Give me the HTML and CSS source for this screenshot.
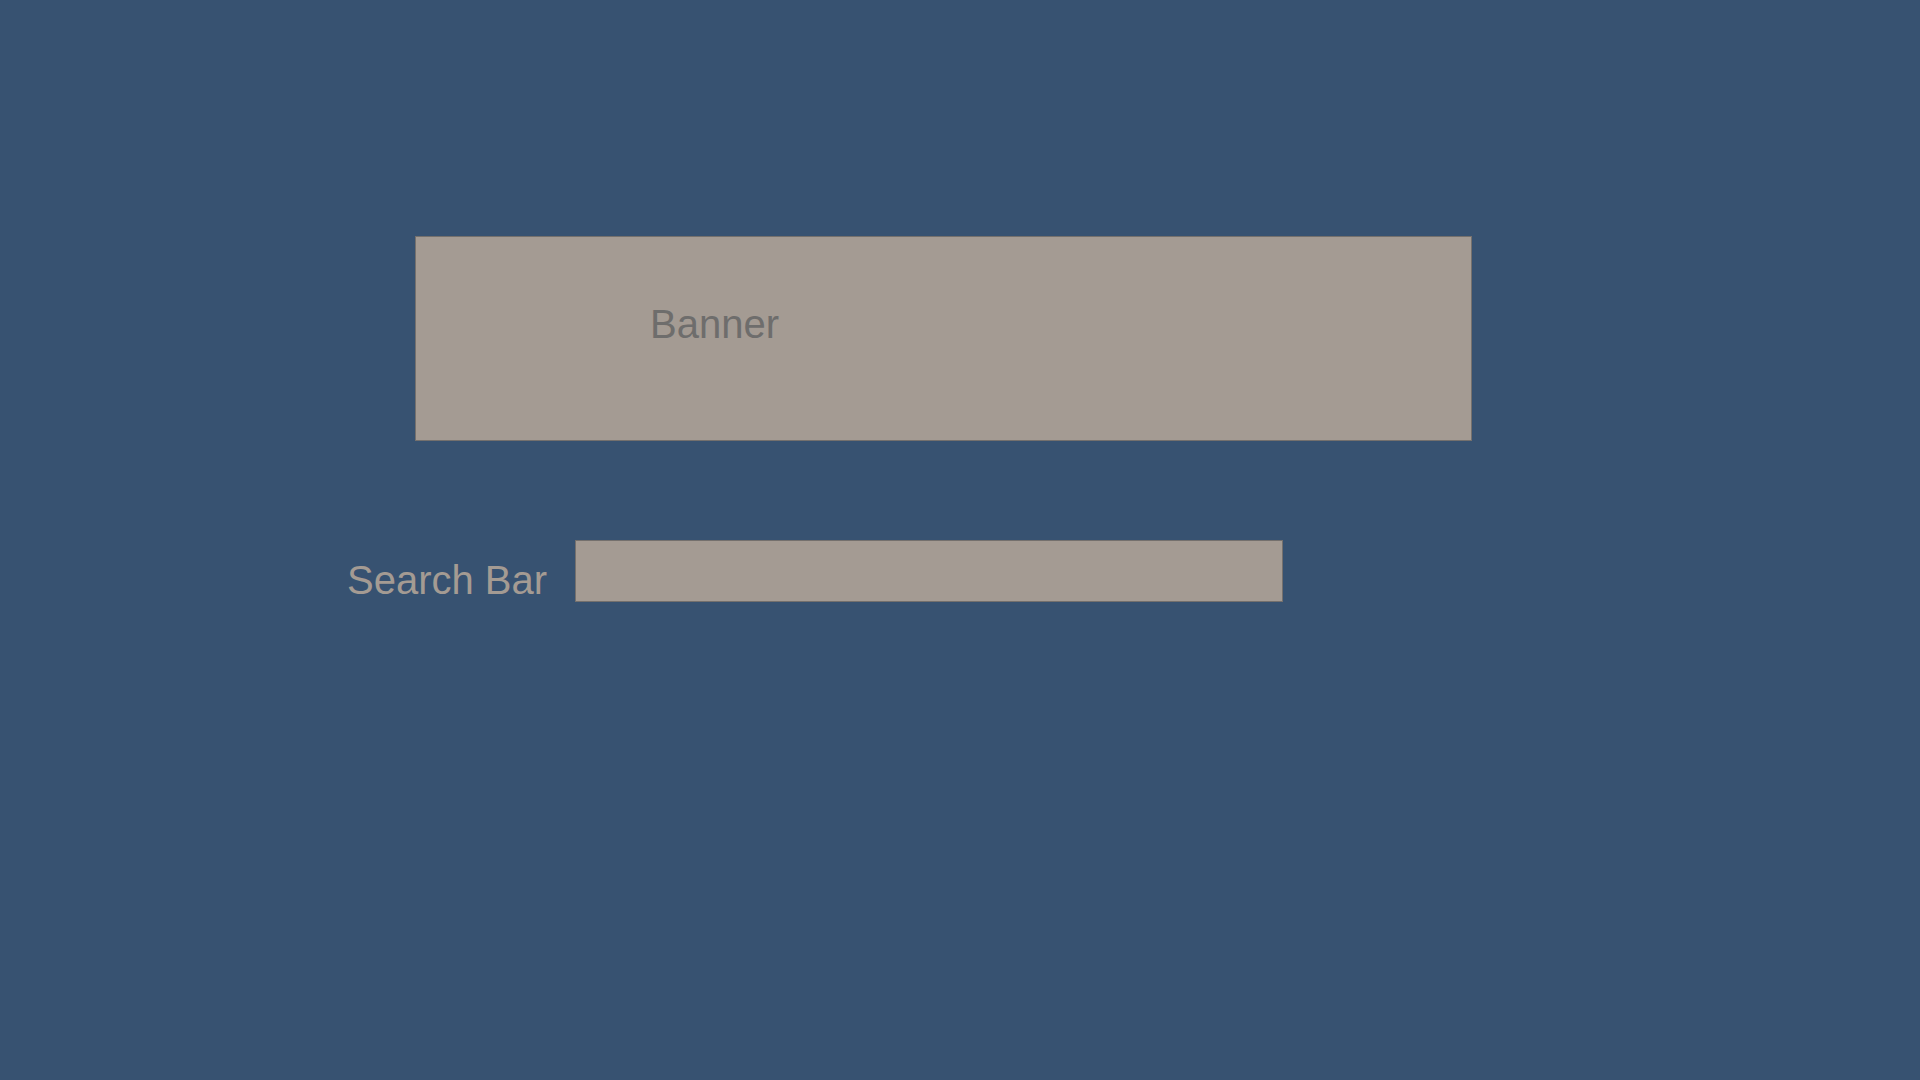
FILE: index.html
```html
<!DOCTYPE html>
<html>
<head>
<meta charset="utf-8">
<link rel="stylesheet" href="styles.css">
</head>
<body>
<div class="page">
  <div class="banner"><span class="banner-text">Banner</span></div>
  <div class="search-row">
    <span class="search-label">Search Bar</span>
    <div class="search-box"></div>
  </div>
</div>
</body>
</html>
```
FILE: styles.css
```css
html, body {
  margin: 0;
  padding: 0;
  background: #375271;
  width: 1920px;
  height: 1080px;
  overflow: hidden;
  font-family: "Liberation Sans", Arial, sans-serif;
}
.page {
  display: flex;
  flex-direction: column;
  padding-top: 236px;
}
.banner {
  box-sizing: border-box;
  margin-left: 415px;
  width: 1057px;
  height: 205px;
  background: #a49b93;
  border: 1px solid #74706d;
  padding: 67px 0 0 234px;
}
.banner-text {
  display: block;
  font-size: 40px;
  line-height: 40px;
  color: #6e6d6c;
}
.search-row {
  display: flex;
  align-items: flex-start;
  margin-top: 99px;
  padding-left: 347px;
}
.search-label {
  font-size: 40px;
  line-height: 40px;
  margin-top: 20px;
  color: #a49b93;
  width: 228px;
  white-space: nowrap;
}
.search-box {
  box-sizing: border-box;
  width: 708px;
  height: 62px;
  background: #a49b93;
  border: 1px solid #74706d;
}
```
